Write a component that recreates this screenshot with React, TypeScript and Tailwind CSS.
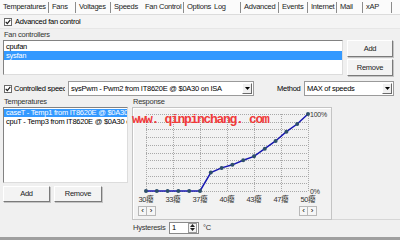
import React from "react";

const tabs: [string, number, boolean][] = [
  ["Temperatures", 49, true],
  ["Fans", 27, true],
  ["Voltages", 35, true],
  ["Speeds", 31, false],
  ["Fan Control", 42, true],
  ["Options", 27, true],
  ["Log", 30, true],
  ["Advanced", 38, true],
  ["Events", 29, true],
  ["Internet", 29, true],
  ["Mail", 26, true],
  ["xAP", 29, true],
];

function Check() {
  return (
    <span className="w-[8px] h-[8px] border border-[#6b6b6b] bg-white flex items-center justify-center shrink-0">
      <svg width="6" height="6" viewBox="0 0 6 6">
        <path d="M0.7 2.9 L2.3 4.6 L5.3 0.9" stroke="#1a1a1a" strokeWidth="1.2" fill="none" />
      </svg>
    </span>
  );
}

function Btn({ label, w, h }: { label: string; w: string; h: string }) {
  return (
    <div
      className={`${w} ${h} bg-[#f3f3f3] border-t border-l border-white border-r border-b border-r-[#7a7a7a] border-b-[#7a7a7a] shadow-[1px_1px_0_#c4c4c4] flex items-center justify-center text-[#222]`}
    >
      {label}
    </div>
  );
}

function Arrow() {
  return (
    <span className="w-[10px] h-[11px] mr-[1px] bg-[#f0f0f0] border-t border-l border-white border-r border-b border-r-[#6a6a6a] border-b-[#6a6a6a] flex items-center justify-center shrink-0">
      <svg width="5" height="3" viewBox="0 0 5 3">
        <path d="M0 0 L5 0 L2.5 3 Z" fill="#000" />
      </svg>
    </span>
  );
}

function Combo({ text, w }: { text: string; w: string }) {
  return (
    <div className={`${w} h-[15px] bg-white border border-[#9a9a9a] flex items-center`}>
      <span className="flex-1 pl-[2px] overflow-hidden whitespace-nowrap">{text}</span>
      <Arrow />
    </div>
  );
}

function ScrollBtns() {
  return (
    <div className="flex h-[10px]">
      <span className="w-[9px] h-[10px] bg-[#f6f6f6] border border-[#b8b8b8] flex items-center justify-center text-[8px] leading-none">
        ‹
      </span>
      <span className="w-[9px] h-[10px] bg-[#f6f6f6] border border-[#b8b8b8] border-l-0 flex items-center justify-center text-[8px] leading-none">
        ›
      </span>
    </div>
  );
}

const values = [0, 0, 0, 0, 0, 0, 24, 30, 34, 40, 45, 55, 65, 77, 87, 100];
const labels = ["30", "33", "37", "40", "43", "47", "50"];

function Chart() {
  const x0 = 13;
  const y0 = 6;
  const y1 = 83;
  const pts = values.map((v, i) => [x0 + 10.8 * i, y1 - (77 * v) / 100]);
  return (
    <svg width="200" height="113" viewBox="0 0 200 113" className="absolute left-0 top-0">
      {Array.from({ length: 7 }).map((_, k) => (
        <line
          key={"v" + k}
          x1={x0 + 27 * k + 0.5}
          x2={x0 + 27 * k + 0.5}
          y1={y0}
          y2={y1}
          stroke="#a9a9a9"
          strokeWidth="1"
          strokeDasharray="1 1"
        />
      ))}
      {Array.from({ length: 11 }).map((_, j) => (
        <line
          key={"h" + j}
          x1={x0}
          x2={x0 + 162}
          y1={Math.round(y0 + 7.7 * j) + 0.5}
          y2={Math.round(y0 + 7.7 * j) + 0.5}
          stroke="#a9a9a9"
          strokeWidth="1"
          strokeDasharray="1 1"
        />
      ))}
      <polyline
        points={pts.map((p) => p.join(",")).join(" ")}
        fill="none"
        stroke="#1717b0"
        strokeWidth="1.5"
      />
      {pts.map((p, i) => (
        <circle key={i} cx={p[0]} cy={p[1]} r="2" fill="#2d4f6a" />
      ))}
      {labels.map((l, k) => (
        <text
          key={l}
          x={x0 + 27 * k}
          y={94}
          textAnchor="middle"
          fontSize="7.5"
          fill="#333"
          fontFamily="'Liberation Sans','Noto Sans CJK SC',sans-serif"
        >
          {l}癈
        </text>
      ))}
      <text x={177} y={9} fontSize="7" fill="#333" fontFamily="'Liberation Sans',sans-serif">
        100%
      </text>
      <text x={177} y={86} fontSize="7" fill="#333" fontFamily="'Liberation Sans',sans-serif">
        0%
      </text>
    </svg>
  );
}

export default function App() {
  return (
    <div className="relative w-[400px] h-[240px] bg-[#f0f0f0] overflow-hidden flex flex-col text-[7.5px] leading-none tracking-[-0.25px] text-black font-['Liberation_Sans','Noto_Sans_CJK_SC',sans-serif]">
      {/* tabs */}
      <div className="h-[15px] bg-[#fbfbfb] border-b border-[#dcdcdc] flex shrink-0">
        {tabs.map(([t, w, sep]) => (
          <div key={t} style={{ width: w }} className="flex items-center justify-between pl-[3px]">
            <span className="whitespace-nowrap text-[#222]">{t}</span>
            {sep ? <span className="w-px h-[11px] bg-[#8c8c8c]" /> : <span />}
          </div>
        ))}
      </div>

      {/* advanced fan control */}
      <div className="h-[14px] flex items-center pl-[4px] gap-[2px] border-b border-[#e6e6e6] bg-[#f4f4f4]">
        <Check />
        <span className="ml-[1px]">Advanced fan control</span>
      </div>

      <div className="h-[11px] flex items-center pl-[4px] text-[#333]">Fan controllers</div>

      <div className="flex">
        <div className="ml-[3px] w-[340px] h-[35px] bg-white border border-[#828282] border-b-[#dcdcdc] border-r-[#dcdcdc] pt-[2px]">
          <div className="h-[8px] flex items-center pl-[2px]">cpufan</div>
          <div className="h-[9px] flex items-center pl-[2px] bg-[#3399ff] text-white">sysfan</div>
        </div>
        <div className="ml-[4px] flex flex-col gap-[2px]">
          <Btn label="Add" w="w-[46px]" h="h-[17px]" />
          <Btn label="Remove" w="w-[46px]" h="h-[17px]" />
        </div>
      </div>

      {/* controlled speed */}
      <div className="mt-[5px] h-[15px] flex items-center">
        <div className="ml-[4px]">
          <Check />
        </div>
        <span className="ml-[2px] w-[51px] overflow-hidden whitespace-nowrap">Controlled speed</span>
        <div className="ml-[3px]">
          <Combo text="sysPwm - Pwm2 from IT8620E @ $0A30 on ISA" w="w-[186px]" />
        </div>
        <span className="ml-[23px] w-[27px]">Method</span>
        <Combo text="MAX of speeds" w="w-[90px]" />
      </div>

      {/* bottom section */}
      <div className="flex">
        <div className="ml-[3px] w-[125px] flex flex-col">
          <div className="h-[11px] flex items-center pl-[1px] text-[#333]">Temperatures</div>
          <div className="h-[76px] bg-white border border-[#828282] border-b-[#dcdcdc] border-r-[#dcdcdc] pt-[1px]">
            <div className="h-[8px] flex items-center pl-[2px] bg-[#3399ff] text-white whitespace-nowrap overflow-hidden">
              caseT - Temp1 from IT8620E @ $0A30 on ISA
            </div>
            <div className="h-[9px] flex items-center pl-[2px] whitespace-nowrap overflow-hidden">
              cpuT - Temp3 from IT8620E @ $0A30 on ISA
            </div>
          </div>
          <div className="mt-[3px] flex gap-[4px]">
            <Btn label="Add" w="w-[47px]" h="h-[16px]" />
            <Btn label="Remove" w="w-[48px]" h="h-[16px]" />
          </div>
        </div>

        <div className="ml-[4px] w-[200px] flex flex-col">
          <div className="h-[11px] flex items-center pl-[1px] text-[#333]">Response</div>
          <div className="relative h-[113px] border border-[#c4c4c4] shadow-[inset_1px_1px_0_#ffffff] bg-[#f2f2f2]">
            <Chart />
            <div className="absolute left-[5px] top-[98px]">
              <ScrollBtns />
            </div>
            <div className="absolute left-[166px] top-[98px]">
              <ScrollBtns />
            </div>
          </div>
          <div className="mt-[1px] h-[13px] flex items-center">
            <span className="ml-[1px] w-[36px] shrink-0 whitespace-nowrap text-[#333]">Hysteresis</span>
            <div className="w-[30px] h-[12px] shrink-0 bg-white border border-[#8a8a8a] flex items-center justify-between">
              <span className="pl-[2px]">1</span>
              <span className="w-[9px] h-[10px] mr-[1px] border border-[#9a9a9a] bg-[#f4f4f4] flex flex-col items-center justify-center gap-[1px]">
                <svg width="5" height="3" viewBox="0 0 5 3">
                  <path d="M0 3 L5 3 L2.5 0 Z" fill="#222" />
                </svg>
                <svg width="5" height="3" viewBox="0 0 5 3">
                  <path d="M0 0 L5 0 L2.5 3 Z" fill="#222" />
                </svg>
              </span>
            </div>
            <span className="ml-[4px] whitespace-nowrap text-[#333]">°C</span>
          </div>
        </div>

        <div className="flex-1 h-[124px] border-b border-[#d6d6d6]" />
      </div>

      <div className="mt-auto h-[3px] bg-[#9f9f9f]" />

      {/* watermark overlay */}
      <div className="absolute left-[132px] top-[113px] text-[13px] leading-none font-bold tracking-[-1.3px] text-[#f03a3a] whitespace-nowrap font-['Liberation_Mono',monospace]">
        www. qinpinchang. com
      </div>
    </div>
  );
}
